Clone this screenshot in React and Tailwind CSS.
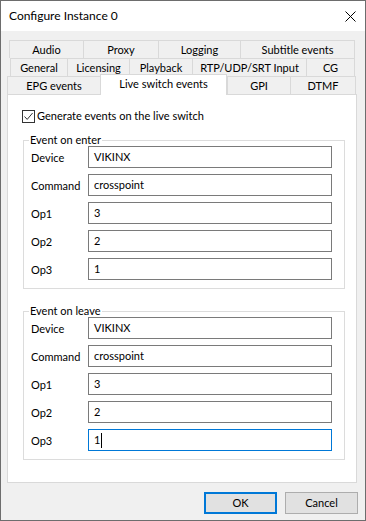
import React from 'react';

const font = { fontFamily: 'Lato, "Liberation Sans", sans-serif' };

const tabRows = [
  { offset: 'ml-[2px]', tabs: [['Audio', 'w-[74px]'], ['Proxy', 'w-[75px]'], ['Logging', 'w-[82px]'], ['Subtitle events', 'w-[115px]']] },
  { offset: 'ml-[3px]', tabs: [['General', 'w-[57px]'], ['Licensing', 'w-[62px]'], ['Playback', 'w-[63px]'], ['RTP/UDP/SRT Input', 'w-[114px]'], ['CG', 'w-[49px]']] },
];

const Tab = ({ label, width, last }) => (
  <div
    className={`${width} h-[18px] flex items-center justify-center pt-px border-t border-l border-[#d9d9d9] bg-[#f0f0f0] text-[11px] text-black ${last ? 'border-r' : ''}`}
  >
    {label}
  </div>
);

const Field = ({ label, value, focused }) => (
  <div className="flex items-center h-[22px]">
    <div className="w-[57px] text-[11px] text-black pt-[2px]">{label}</div>
    <div
      className={`w-[244px] h-[22px] flex items-center px-[5px] bg-white text-[11px] text-black border ${
        focused ? 'border-[#0078d7]' : 'border-[#7a7a7a]'
      }`}
    >
      <span>{value}</span>
      {focused && <span className="w-px h-[15px] bg-black ml-px" />}
    </div>
  </div>
);

const EventGroup = ({ title, focusLast, className }) => (
  <fieldset className={`w-[322px] border border-[#dcdcdc] pl-[7px] pr-[12px] pb-[8px] ${className}`}>
    <legend className="-ml-[2px] px-[1px] text-[11px] leading-[12px] text-black">{title}</legend>
    <div className="flex flex-col gap-[6px]">
      <Field label="Device" value="VIKINX" />
      <Field label="Command" value="crosspoint" />
      <Field label="Op1" value="3" />
      <Field label="Op2" value="2" />
      <Field label="Op3" value="1" focused={focusLast} />
    </div>
  </fieldset>
);

export default function App() {
  return (
    <div style={font} className="w-[366px] h-[521px] flex flex-col border border-[#6d6d6d] bg-[#f0f0f0] overflow-hidden">
      {/* Title bar */}
      <div className="h-[30px] bg-white flex items-center justify-between pl-[8px] pr-[9px]">
        <span className="text-[12px] text-black">Configure Instance 0</span>
        <svg width="11" height="11" viewBox="0 0 11 11">
          <path d="M0.5 0.5 L10.5 10.5 M10.5 0.5 L0.5 10.5" stroke="#000" strokeWidth="1" />
        </svg>
      </div>

      <div className="flex-1 flex flex-col pt-[9px] pl-[6px]">
        {/* Tabs */}
        <div className="flex flex-col">
          {tabRows.map((row, i) => (
            <div key={i} className={`flex ${row.offset}`}>
              {row.tabs.map(([label, w], j) => (
                <Tab key={label} label={label} width={w} last={j === row.tabs.length - 1} />
              ))}
            </div>
          ))}
          <div className="flex items-end h-[18px]">
            <Tab label="EPG events" width="w-[93px]" />
            <div className="relative z-10 w-[127px] h-[21px] -mb-px flex items-center justify-center pb-[2px] bg-white border-t border-l border-r border-[#d9d9d9] text-[11px] text-black">
              Live switch events
            </div>
            <Tab label="GPI" width="w-[63px]" />
            <Tab label="DTMF" width="w-[66px]" last />
          </div>
        </div>

        {/* Panel */}
        <div className="w-[350px] h-[389px] bg-white border border-[#d9d9d9] pt-[15px] pl-[14px]">
          <label className="flex items-center h-[13px] text-[11px] text-black">
            <span className="w-[13px] h-[13px] border border-[#333] bg-white flex items-center justify-center">
              <svg width="11" height="11" viewBox="0 0 11 11">
                <path d="M1.5 5.5 L4.2 8.4 L9.6 2" fill="none" stroke="#333" strokeWidth="1" />
              </svg>
            </span>
            <span className="ml-[2px]">Generate events on the live switch</span>
          </label>
          <EventGroup title="Event on enter" className="mt-[11px] ml-px" />
          <EventGroup title="Event on leave" focusLast className="mt-[16px] ml-px" />
        </div>

        {/* Buttons */}
        <div className="flex justify-end gap-[8px] mt-[9px] pr-[7px]">
          <button className="w-[73px] h-[22px] bg-[#e1e1e1] border-2 border-[#0078d7] text-[11px] text-black">OK</button>
          <button className="w-[73px] h-[22px] bg-[#e1e1e1] border border-[#adadad] text-[11px] text-black">Cancel</button>
        </div>
      </div>
    </div>
  );
}
